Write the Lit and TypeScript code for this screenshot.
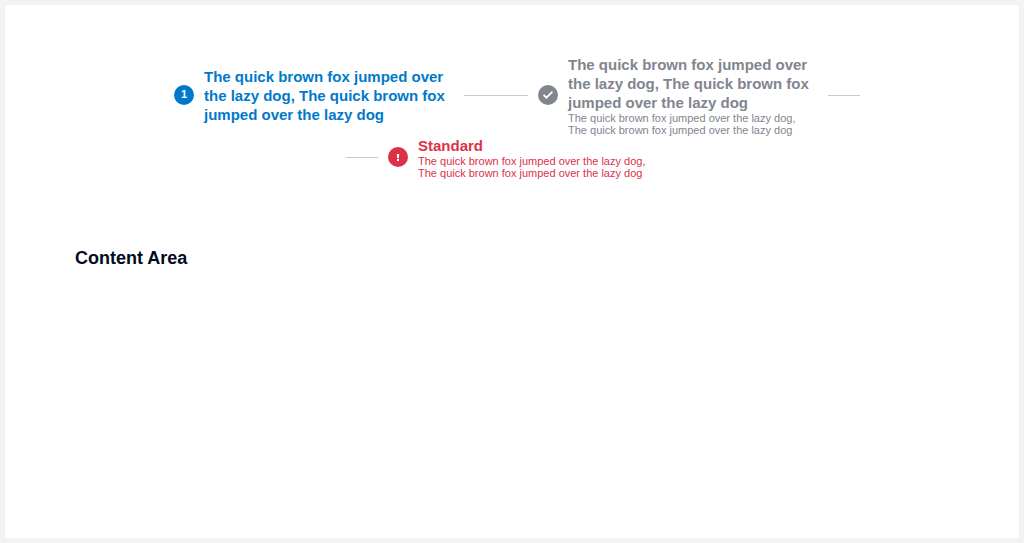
import { LitElement, html, css, svg, nothing } from "lit";
import { customElement, property } from "lit/decorators.js";
import { classMap } from "lit/directives/class-map.js";

type StepState = "active" | "done" | "error";

interface Step {
  state: StepState;
  title: string;
  lines: string[];
}

const steps: Step[] = [
  {
    state: "active",
    title:
      "The quick brown fox jumped over the lazy dog, The quick brown fox jumped over the lazy dog",
    lines: [],
  },
  {
    state: "done",
    title:
      "The quick brown fox jumped over the lazy dog, The quick brown fox jumped over the lazy dog",
    lines: [
      "The quick brown fox jumped over the lazy dog,",
      "The quick brown fox jumped over the lazy dog",
    ],
  },
  {
    state: "error",
    title: "Standard",
    lines: [
      "The quick brown fox jumped over the lazy dog,",
      "The quick brown fox jumped over the lazy dog",
    ],
  },
];

@customElement("step-item")
class StepItem extends LitElement {
  @property({ attribute: false }) step!: Step;
  @property({ type: Number }) index = 1;
  @property({ type: Boolean }) first = false;
  @property({ type: Boolean }) last = false;

  static styles = css`
    :host {
      display: block;
      height: 100%;
    }
    .step {
      display: flex;
      align-items: center;
      gap: 10px;
      height: 100%;
    }
    .first {
      padding-left: 10px;
    }
    .last {
      padding-right: 10px;
    }
    .line {
      flex: none;
      width: 32px;
      height: 1px;
      background: #c8c9cc;
    }
    .badge {
      flex: none;
      display: flex;
      align-items: center;
      justify-content: center;
      width: 20px;
      height: 20px;
      margin-bottom: 1px;
      border-radius: 50%;
      background: currentColor;
    }
    .number {
      padding-bottom: 2px;
      color: #fff;
      font-size: 11px;
      line-height: 12px;
      font-weight: 700;
    }
    .text {
      width: 250px;
    }
    .title {
      font-size: 15px;
      line-height: 19px;
      font-weight: 700;
    }
    .subtitle {
      font-size: 11px;
      line-height: 12px;
    }
    .active {
      color: #0079cc;
    }
    .done {
      color: #81858f;
    }
    .error {
      color: #dc3147;
    }
  `;

  private badge() {
    if (this.step.state === "active") {
      return html`<span class="number">${this.index}</span>`;
    }
    const glyph =
      this.step.state === "done"
        ? svg`<path d="M5.6 9.8 8.4 12.6 14.5 6.6" fill="none" stroke="#fff" stroke-width="1.9" />`
        : svg`<path d="M8.8 7h2.4l-.3 4.2H9.1zM9 12h2v2H9z" fill="#fff" />`;
    return html`<svg width="20" height="20" viewBox="0 0 20 20" aria-hidden="true">${glyph}</svg>`;
  }

  render() {
    const { state, title, lines } = this.step;
    return html`
      <div
        class=${classMap({ step: true, first: this.first, last: this.last, [state]: true })}
      >
        ${this.first ? nothing : html`<span class="line"></span>`}
        <span class="badge">${this.badge()}</span>
        <div class="text">
          <div class="title">${title}</div>
          ${lines.map((line) => html`<div class="subtitle">${line}</div>`)}
        </div>
        ${this.last ? nothing : html`<span class="line"></span>`}
      </div>
    `;
  }
}

@customElement("app-root")
class AppRoot extends LitElement {
  static styles = css`
    :host {
      display: flex;
      box-sizing: border-box;
      min-height: 100vh;
      padding: 5px;
      background: #f2f3f5;
      font-family: "Liberation Sans", Arial, sans-serif;
    }
    .card {
      flex: 1;
      padding: 50px 70px;
      border-radius: 2px;
      background: #fff;
    }
    .steps {
      display: flex;
      flex-wrap: wrap;
      justify-content: center;
      margin: 0;
      padding: 0;
      list-style: none;
    }
    .heading {
      margin: 68px 0 0;
      color: #000b23;
      font-size: 18px;
      line-height: 22px;
      font-weight: 700;
    }
  `;

  render() {
    return html`
      <main class="card">
        <ol class="steps">
          ${steps.map(
            (step, i) => html`<li>
              <step-item
                .step=${step}
                .index=${i + 1}
                .first=${i === 0}
                .last=${i === steps.length - 1}
              ></step-item>
            </li>`
          )}
        </ol>
        <h1 class="heading">Content Area</h1>
      </main>
    `;
  }
}
